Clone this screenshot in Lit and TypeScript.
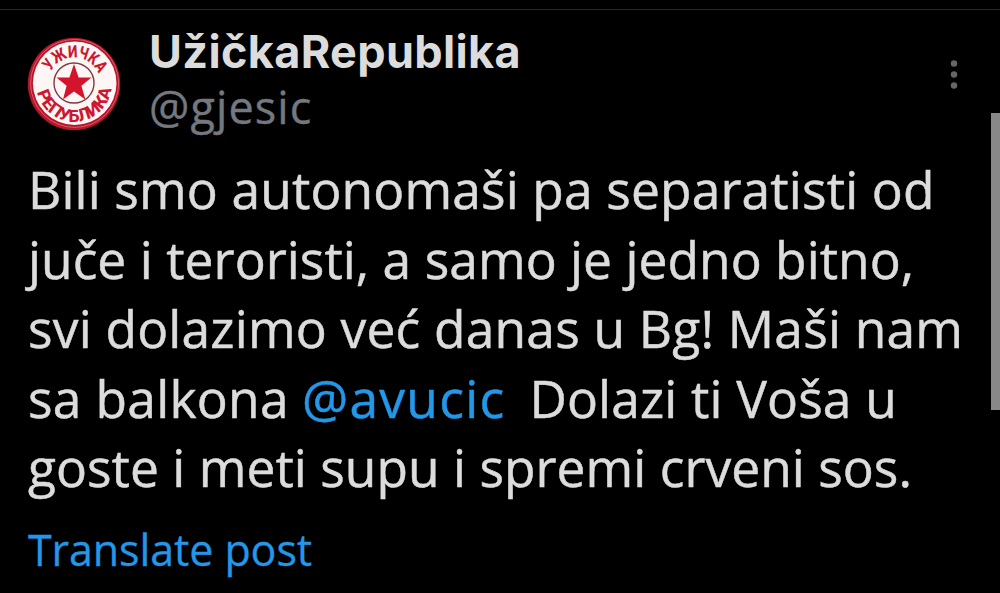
import { LitElement, html, css } from 'lit'
import { customElement, property } from 'lit/decorators.js'
import { styleMap } from 'lit/directives/style-map.js'

interface Segment {
	text: string
	/** Letter spacing in px */
	tracking: number
	mention?: boolean
}

const LINES: Segment[][] = [
	[{ text: 'Bili smo autonomaši pa separatisti od', tracking: 0.14 }],
	[{ text: 'juče i teroristi, a samo je jedno bitno,', tracking: 0.04 }],
	[{ text: 'svi dolazimo već danas u Bg! Maši nam', tracking: 0.2 }],
	[
		{ text: 'sa balkona', tracking: 0.3 },
		{ text: '@avucic', tracking: 1.3, mention: true },
		{ text: 'Dolazi ti Voša u', tracking: 0.15 },
	],
	[{ text: 'goste i meti supu i spremi crveni sos.', tracking: 0.03 }],
]

/**
 * Round badge with a star and lettering around it.
 *
 * @element post-avatar
 */
@customElement('post-avatar')
export class PostAvatar extends LitElement {
	static styles = css`
		:host {
			display: block;
			width: 94px;
			height: 94px;
		}

		svg {
			display: block;
		}

		text {
			font-family: 'Roboto', sans-serif;
			font-size: 17px;
			font-weight: 800;
			fill: #cb1830;
		}
	`

	render() {
		return html`
			<svg width="94" height="94" viewBox="-47 -47 94 94" aria-hidden="true">
				<defs>
					<path id="top" d="M-23.2 -12.5A26.4 26.4 0 0 1 26 -5" />
					<path id="bottom" d="M-36.8 8A37.7 37.7 0 0 0 37.7 -1" />
				</defs>
				<circle r="46.2" fill="#b8142a" />
				<circle cx="0.6" cy="-0.6" r="44" fill="none" stroke="#e0707c" stroke-width="0.8" />
				<circle cx="0.7" cy="-0.8" r="41.8" fill="#fdf6f4" />
				<circle cy="-1" r="20" fill="none" stroke="#7d3a42" stroke-width="1.4" />
				<path
					d="M0 -20L4.6 -6.6H17.5L7.4 1.8L11.4 15.5L0 7.6L-11 15.5L-7.4 1.8L-17.5 -6.6H-4.6Z"
					fill="#d3142c"
				/>
				<text>
					<textPath href="#top" textLength="59" lengthAdjust="spacingAndGlyphs">УЖИЧКА</textPath>
				</text>
				<text>
					<textPath href="#bottom" textLength="105" lengthAdjust="spacingAndGlyphs">РЕПУБЛИКА</textPath>
				</text>
			</svg>
		`
	}
}

/**
 * Post text, one row per line.
 *
 * @element post-body
 * @prop {Segment[][]} lines
 */
@customElement('post-body')
export class PostBody extends LitElement {
	@property({ type: Array }) lines: Segment[][] = []

	static styles = css`
		:host {
			display: block;
			font-size: 51.5px;
			line-height: 69.5px;
			color: #dcdcdc;
			-webkit-text-stroke: 0.5px currentColor;
		}

		.line {
			display: flex;
			gap: 20px;
			white-space: pre;
		}

		.mention {
			color: #2397e8;
			margin: 0 4px 0 -7px;
		}
	`

	render() {
		return this.lines.map(
			(line) => html`
				<div class="line">
					${line.map(
						(s) => html`<span
							class=${s.mention ? 'mention' : 'plain'}
							style=${styleMap({ letterSpacing: `${s.tracking}px` })}
							>${s.text}</span
						>`,
					)}
				</div>
			`,
		)
	}
}

@customElement('app-root')
export class AppRoot extends LitElement {
	static styles = css`
		:host {
			display: block;
			position: relative;
			box-sizing: border-box;
			height: 593px;
			padding-top: 9px;
			overflow: hidden;
			background: #000;
			font-family: 'Open Sans', sans-serif;
		}

		.post {
			box-sizing: border-box;
			height: 584px;
			border-top: 1px solid #2a2a2a;
			padding: 18px 0 0 28px;
		}

		header {
			display: flex;
			height: 127px;
		}

		post-avatar {
			margin: 9px 28px 0 -1px;
		}

		.names {
			flex: 1;
		}

		.name {
			font-family: 'Inter', sans-serif;
			font-size: 45px;
			font-weight: 700;
			line-height: 48px;
			letter-spacing: 0.35px;
			color: #dcdcdc;
		}

		.handle {
			font-size: 45px;
			line-height: 62px;
			letter-spacing: 1.1px;
			color: #74787f;
			-webkit-text-stroke: 0.4px currentColor;
		}

		.more {
			all: unset;
			width: 8px;
			height: 30px;
			margin: 31px 42px 0 0;
		}

		.more svg {
			display: block;
		}

		.translate {
			display: block;
			margin-top: 17px;
			font-size: 43px;
			line-height: 59px;
			letter-spacing: -0.1px;
			color: #2397e8;
			text-decoration: none;
			-webkit-text-stroke: 0.3px currentColor;
		}

		/* floats over the right edge of the post */
		.scrollbar {
			position: absolute;
			top: 113px;
			right: 0;
			width: 9px;
			height: 297px;
			background: #888;
		}
	`

	render() {
		return html`
			<article class="post">
				<header>
					<post-avatar></post-avatar>
					<div class="names">
						<div class="name">UžičkaRepublika</div>
						<div class="handle">@gjesic</div>
					</div>
					<button class="more" aria-label="More">
						<svg width="8" height="30" viewBox="0 0 8 30" fill="#666">
							<circle cx="4" cy="4.5" r="3.2" />
							<circle cx="4" cy="15.5" r="3.2" />
							<circle cx="4" cy="26.5" r="3.2" />
						</svg>
					</button>
				</header>
				<post-body .lines=${LINES}></post-body>
				<a class="translate">Translate post</a>
			</article>
			<div class="scrollbar"></div>
		`
	}
}
